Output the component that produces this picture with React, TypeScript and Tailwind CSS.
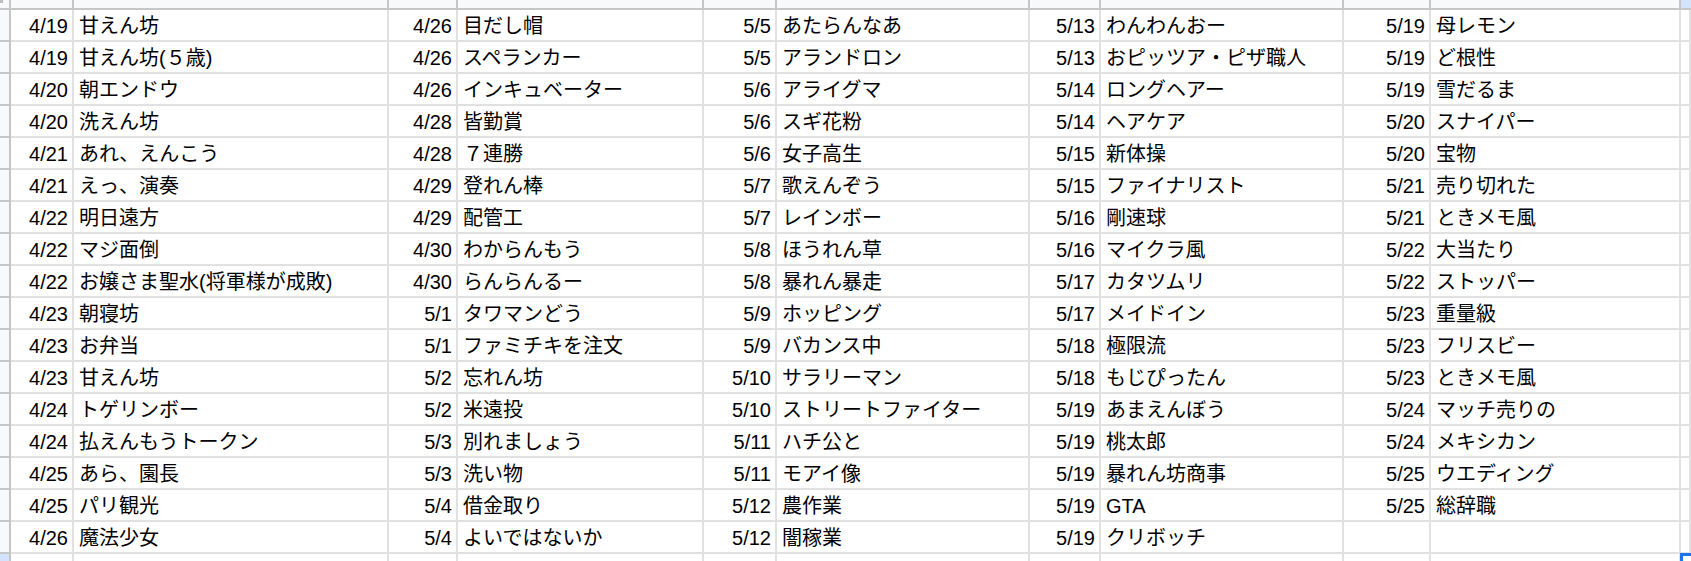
import React from 'react';

type Pair = [string, string];

const columns: Pair[][] = [
  [
    ['4/19', '甘えん坊'],
    ['4/19', '甘えん坊(５歳)'],
    ['4/20', '朝エンドウ'],
    ['4/20', '洗えん坊'],
    ['4/21', 'あれ、えんこう'],
    ['4/21', 'えっ、演奏'],
    ['4/22', '明日遠方'],
    ['4/22', 'マジ面倒'],
    ['4/22', 'お嬢さま聖水(将軍様が成敗)'],
    ['4/23', '朝寝坊'],
    ['4/23', 'お弁当'],
    ['4/23', '甘えん坊'],
    ['4/24', 'トゲリンボー'],
    ['4/24', '払えんもうトークン'],
    ['4/25', 'あら、園長'],
    ['4/25', 'パリ観光'],
    ['4/26', '魔法少女'],
  ],
  [
    ['4/26', '目だし帽'],
    ['4/26', 'スペランカー'],
    ['4/26', 'インキュベーター'],
    ['4/28', '皆勤賞'],
    ['4/28', '７連勝'],
    ['4/29', '登れん棒'],
    ['4/29', '配管工'],
    ['4/30', 'わからんもう'],
    ['4/30', 'らんらんるー'],
    ['5/1', 'タワマンどう'],
    ['5/1', 'ファミチキを注文'],
    ['5/2', '忘れん坊'],
    ['5/2', '米遠投'],
    ['5/3', '別れましょう'],
    ['5/3', '洗い物'],
    ['5/4', '借金取り'],
    ['5/4', 'よいではないか'],
  ],
  [
    ['5/5', 'あたらんなあ'],
    ['5/5', 'アランドロン'],
    ['5/6', 'アライグマ'],
    ['5/6', 'スギ花粉'],
    ['5/6', '女子高生'],
    ['5/7', '歌えんぞう'],
    ['5/7', 'レインボー'],
    ['5/8', 'ほうれん草'],
    ['5/8', '暴れん暴走'],
    ['5/9', 'ホッピング'],
    ['5/9', 'バカンス中'],
    ['5/10', 'サラリーマン'],
    ['5/10', 'ストリートファイター'],
    ['5/11', 'ハチ公と'],
    ['5/11', 'モアイ像'],
    ['5/12', '農作業'],
    ['5/12', '闇稼業'],
  ],
  [
    ['5/13', 'わんわんおー'],
    ['5/13', 'おピッツア・ピザ職人'],
    ['5/14', 'ロングヘアー'],
    ['5/14', 'ヘアケア'],
    ['5/15', '新体操'],
    ['5/15', 'ファイナリスト'],
    ['5/16', '剛速球'],
    ['5/16', 'マイクラ風'],
    ['5/17', 'カタツムリ'],
    ['5/17', 'メイドイン'],
    ['5/18', '極限流'],
    ['5/18', 'もじぴったん'],
    ['5/19', 'あまえんぼう'],
    ['5/19', '桃太郎'],
    ['5/19', '暴れん坊商事'],
    ['5/19', 'GTA'],
    ['5/19', 'クリボッチ'],
  ],
  [
    ['5/19', '母レモン'],
    ['5/19', 'ど根性'],
    ['5/19', '雪だるま'],
    ['5/20', 'スナイパー'],
    ['5/20', '宝物'],
    ['5/21', '売り切れた'],
    ['5/21', 'ときメモ風'],
    ['5/22', '大当たり'],
    ['5/22', 'ストッパー'],
    ['5/23', '重量級'],
    ['5/23', 'フリスビー'],
    ['5/23', 'ときメモ風'],
    ['5/24', 'マッチ売りの'],
    ['5/24', 'メキシカン'],
    ['5/25', 'ウエディング'],
    ['5/25', '総辞職'],
    ['', ''],
  ],
];

const cell = 'h-[32px] border-r-2 border-b-2 border-[#e1e1e1] flex items-end pb-[4px] overflow-hidden whitespace-nowrap';
const rowHead = 'border-r-2 border-b-2 border-[#c4c7c5] bg-[#f8f9fa]';

const App: React.FC = () => {
  return (
    <div className="h-[561px] w-[1691px] overflow-hidden bg-white text-black text-[20px] leading-[20px] font-['Liberation_Sans','Noto_Sans_CJK_JP',sans-serif]">
      <div className="grid grid-cols-[11px_63px_315px_69px_246px_73px_253px_71px_243px_87px_250px_1fr]">
        {/* column header strip */}
        <div className="relative h-[10px] border-r-2 border-b-2 border-[#c4c7c5] bg-[#f8f9fa]">
          <div className="absolute left-0 top-0 h-[3px] w-[3px] bg-[#bdbdbd]" />
        </div>
        {Array.from({ length: 10 }).map((_, i) => (
          <div key={i} className="h-[10px] border-r-2 border-b-2 border-[#c4c7c5] bg-[#f8f9fa]" />
        ))}
        <div className="h-[10px] border-b-2 border-[#c4c7c5] bg-[#d3e3fd]" />

        {columns[0].map((_, r) => (
          <React.Fragment key={r}>
            <div className={`h-[32px] ${rowHead}`} />
            {columns.map((col, c) => (
              <React.Fragment key={c}>
                <div className={`${cell} justify-end pr-[4px]`}>{col[r][0]}</div>
                <div className={`${cell} pl-[5px]`}>{col[r][1]}</div>
              </React.Fragment>
            ))}
            <div className={cell} />
          </React.Fragment>
        ))}

        {/* partial next row with selection */}
        <div className="h-[32px] border-r-2 border-b-2 border-[#c4c7c5] bg-[#d3e3fd]" />
        {Array.from({ length: 10 }).map((_, i) => (
          <div key={i} className="h-[32px] border-r-2 border-b-2 border-[#e1e1e1]" />
        ))}
        <div className="relative h-[32px]">
          <div className="absolute -left-[1px] -top-[1px] right-0 bottom-0 border-l-[3px] border-t-[3px] border-[#1a73e8]" />
        </div>
      </div>
    </div>
  );
};

export default App;
